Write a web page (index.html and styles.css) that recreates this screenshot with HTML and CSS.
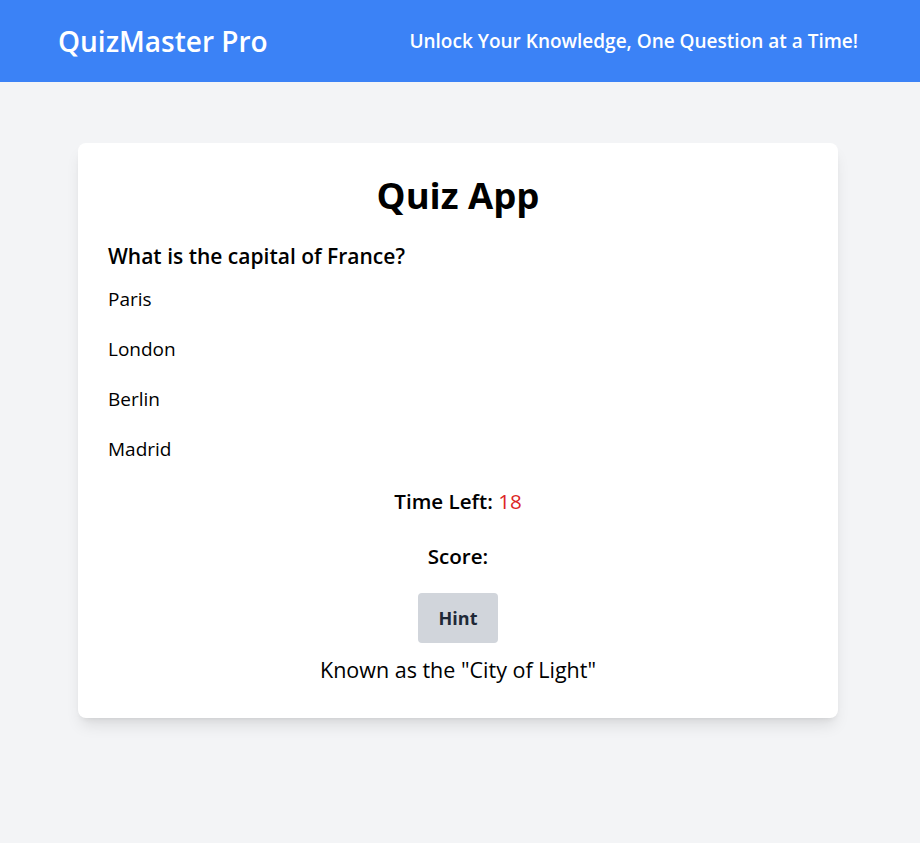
FILE: index.html
```html
<!DOCTYPE html>
<html lang="en">
<head>
<meta charset="utf-8">
<title>QuizMaster Pro</title>
<link rel="stylesheet" href="styles.css">
</head>
<body>
<header class="site-header">
  <div class="header-inner">
    <h1 class="brand">QuizMaster Pro</h1>
    <p class="tagline">Unlock Your Knowledge, One Question at a Time!</p>
  </div>
</header>
<main class="main">
  <section class="card">
    <h2 class="title">Quiz App</h2>
    <h3 class="question">What is the capital of France?</h3>
    <ul class="options">
      <li class="option">Paris</li>
      <li class="option">London</li>
      <li class="option">Berlin</li>
      <li class="option">Madrid</li>
    </ul>
    <p class="timer">Time Left: <span class="time">18</span></p>
    <p class="score">Score: </p>
    <div class="hint-row"><button class="hint-btn">Hint</button></div>
    <p class="hint-text">Known as the "City of Light"</p>
  </section>
</main>
</body>
</html>
```

FILE: styles.css
```css
* { box-sizing: border-box; }
html, body { margin: 0; padding: 0; }
body {
  background: #f3f4f6;
  font-family: "Open Sans", "Noto Sans", sans-serif;
  color: #000;
  min-height: 843px;
}
.site-header {
  background: #3b82f6;
  color: #fff;
  height: 82px;
}
.header-inner {
  height: 100%;
  padding: 0 62px 0 58px;
  display: flex;
  align-items: center;
  justify-content: space-between;
}
.brand {
  margin: 0;
  font-size: 28px;
  font-weight: 600;
  line-height: 36px;
}
.tagline {
  margin: 0;
  font-size: 19px;
  font-weight: 600;
  line-height: 28px;
}
.main {
  padding: 61px 82px 0 78px;
}
.card {
  width: 760px;
  background: #fff;
  border-radius: 8px;
  box-shadow: 0 10px 15px -3px rgba(0,0,0,0.1), 0 4px 6px -4px rgba(0,0,0,0.1);
  padding: 30px 30px 34px 30px;
}
.title {
  margin: 0 0 25px;
  text-align: center;
  font-size: 36.5px;
  font-weight: 700;
  line-height: 44px;
}
.question {
  margin: 0 0 4px;
  font-size: 21px;
  font-weight: 600;
  line-height: 28px;
}
.options {
  list-style: none;
  margin: 0;
  padding: 0;
}
.option {
  font-size: 19px;
  line-height: 28px;
  padding: 11px 0;
}
.timer, .score {
  margin: 0;
  text-align: center;
  font-size: 20.6px;
  font-weight: 600;
  line-height: 28px;
}
.timer { margin-top: 13px; }
.score { margin-top: 27px; }
.time { color: #dc2626; font-weight: 400; }
.hint-row {
  display: flex;
  justify-content: center;
  margin-top: 23px;
}
.hint-btn {
  width: 80px;
  height: 50px;
  border: none;
  border-radius: 4px;
  background: #d1d5db;
  color: #1f2937;
  font-family: inherit;
  font-size: 18px;
  font-weight: 700;
}
.hint-text {
  margin: 13px 0 0;
  text-align: center;
  font-size: 21.5px;
  line-height: 28px;
}
```
